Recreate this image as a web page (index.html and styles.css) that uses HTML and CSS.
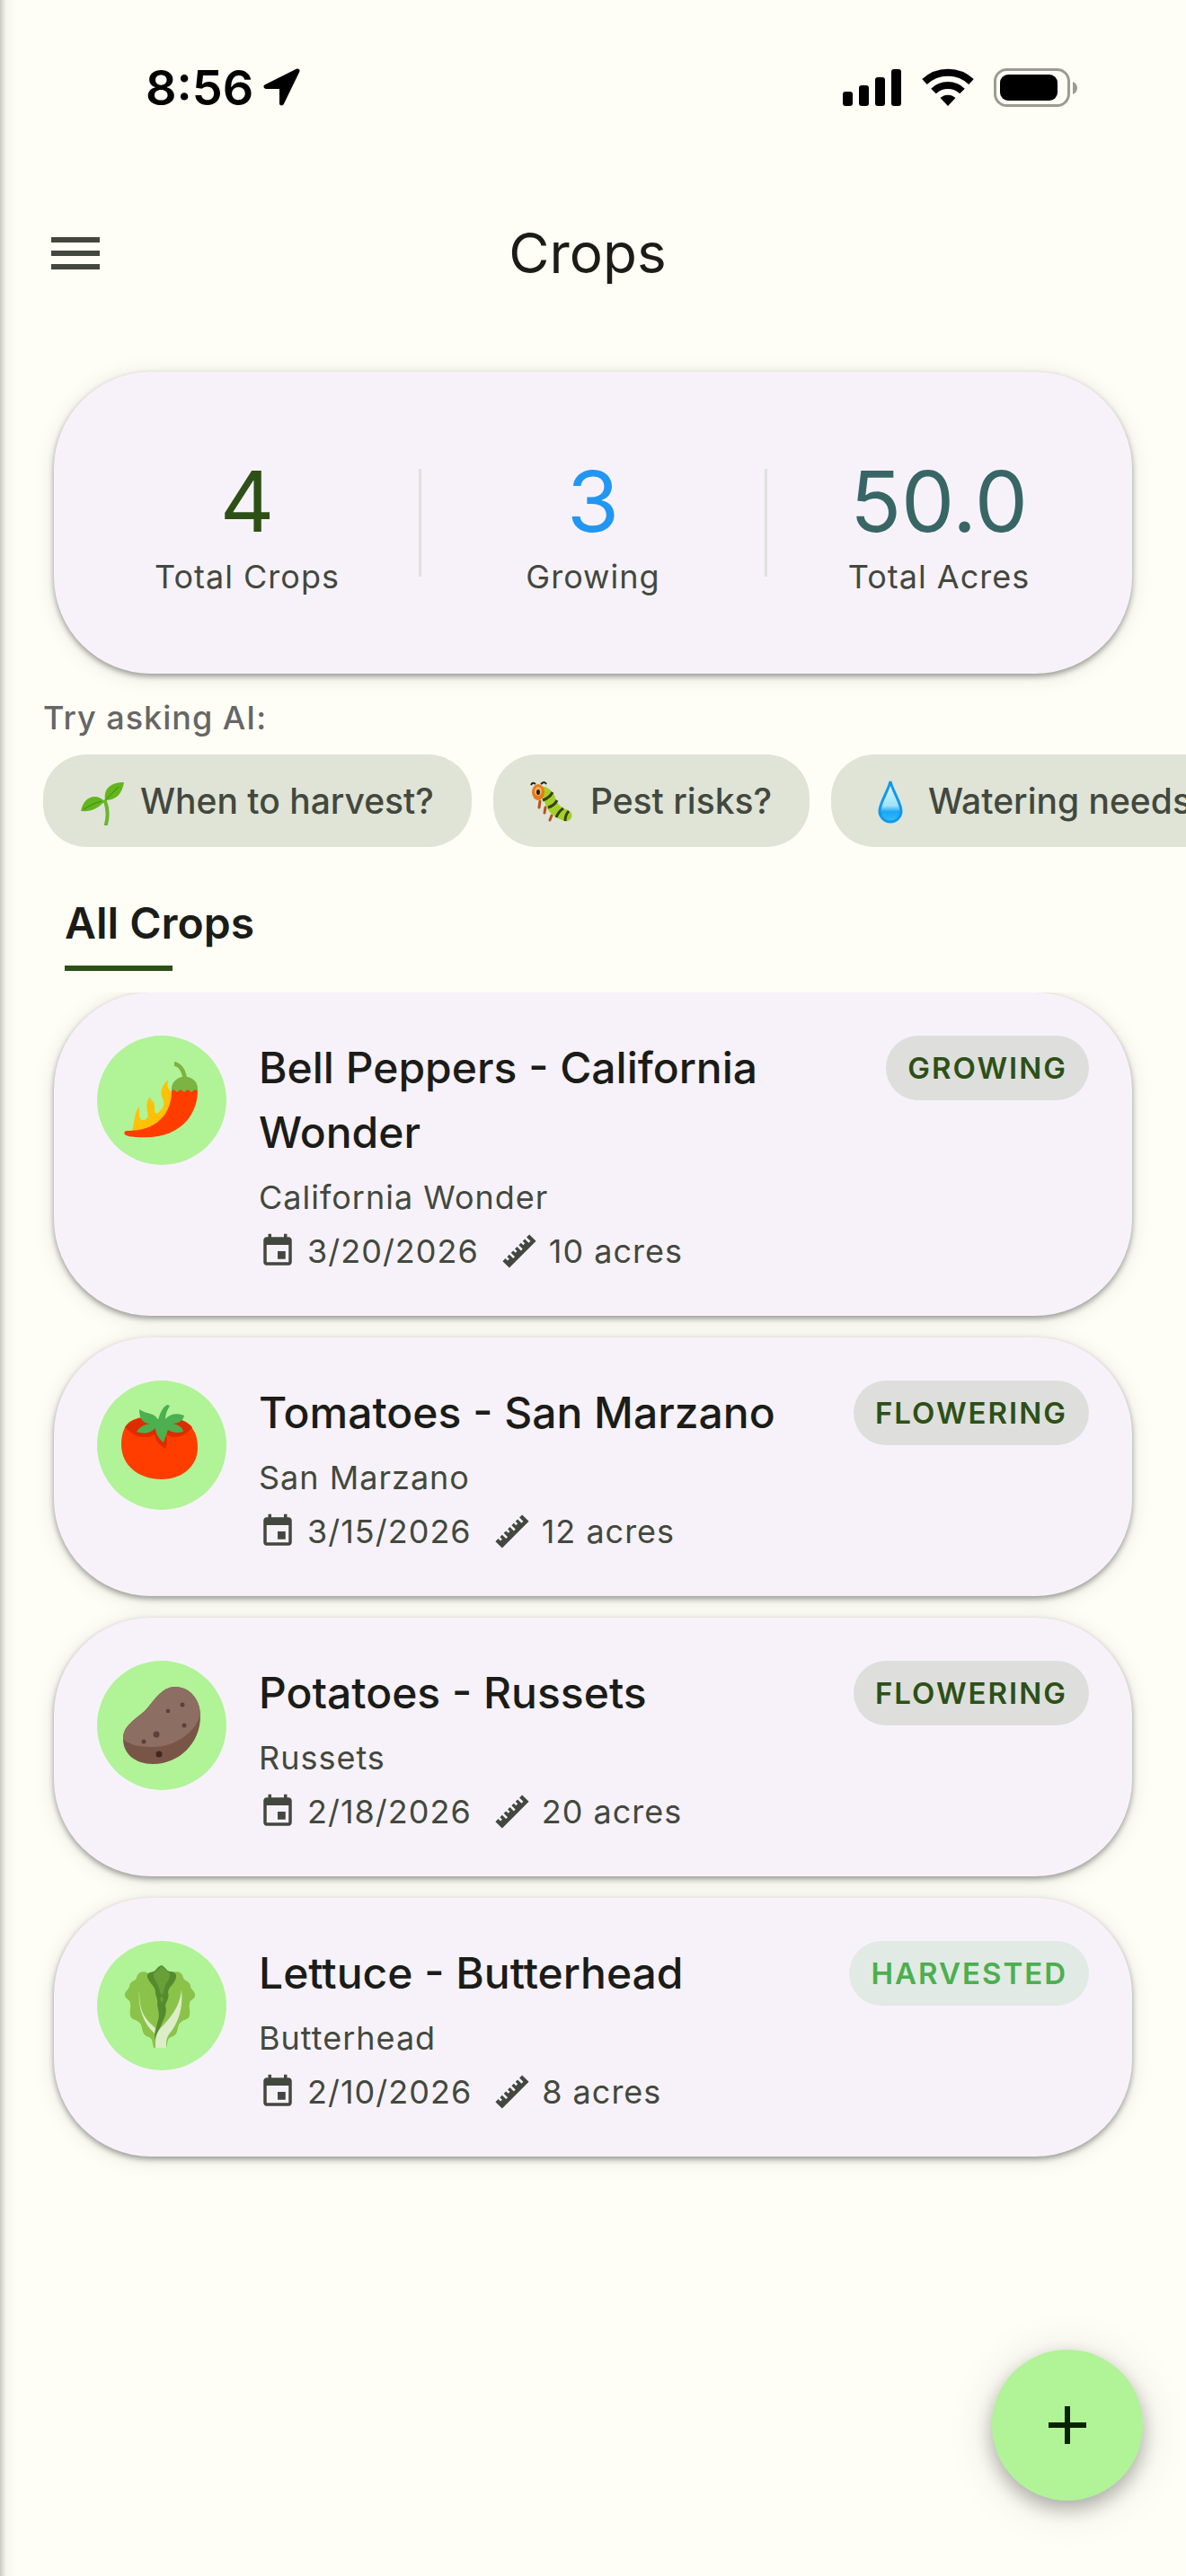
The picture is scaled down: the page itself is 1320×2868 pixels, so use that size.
FILE: index.html
```html
<!DOCTYPE html>
<html lang="en">

<head>
    <meta charset="UTF-8">
    <meta name="viewport" content="width=device-width, initial-scale=1.0">
    <title>Crops</title>
    <link rel="stylesheet" href="styles.css">
</head>

<body>
    <!-- shared icons -->
    <svg class="defs" aria-hidden="true">
        <symbol id="event" viewBox="0 0 24 24">
            <path d="M17 12h-5v5h5v-5zM16 1v2H8V1H6v2H5c-1.11 0-1.99.9-1.99 2L3 19c0 1.1.89 2 2 2h14c1.1 0 2-.9 2-2V5c0-1.1-.9-2-2-2h-1V1h-2zm3 18H5V8h14v11z" />
        </symbol>
        <symbol id="ruler" viewBox="0 0 24 24">
            <path d="M1.39 18.36L3.16 16.6 4.58 18l1.06-1.05-1.42-1.41 1.42-1.42 2.47 2.48 1.06-1.06-2.47-2.48 1.41-1.41 1.42 1.41L10.59 12 9.17 10.59l1.42-1.42 2.47 2.48 1.06-1.06-2.47-2.48 1.41-1.41 1.41 1.41 1.07-1.06-1.42-1.41 1.42-1.42L18 6.7l1.07-1.06-2.47-2.48 1.76-1.77 4.25 4.25L5.64 22.61z" />
        </symbol>
    </svg>

    <div class="status-bar">
        <div class="status-left">
            <span class="time">8:56</span>
            <svg width="44" height="44" viewBox="0 0 44 44">
                <path d="M39 3L4 20.5 21.5 20.5 21.5 39z" stroke="#000" stroke-width="5" stroke-linejoin="round" />
            </svg>
        </div>
        <div class="status-right">
            <svg width="66" height="44" viewBox="0 0 66 44">
                <rect x="0" y="26" width="11" height="16" rx="3" />
                <rect x="18" y="19" width="11" height="23" rx="3" />
                <rect x="36" y="10" width="11" height="32" rx="3" />
                <rect x="54" y="1" width="11" height="41" rx="3" />
            </svg>
            <svg width="58" height="44" viewBox="0 0 58 44">
                <path d="M29 42L20.5 33a12.5 12.5 0 0 1 17 0z" />
                <path d="M13 25.5a23 23 0 0 1 32 0" fill="none" stroke="#000" stroke-width="8" />
                <path d="M3 15a38 38 0 0 1 52 0" fill="none" stroke="#000" stroke-width="8" />
            </svg>
            <svg width="94" height="44" viewBox="0 0 94 44">
                <rect x="1.5" y="1.5" width="82" height="40" rx="13" fill="none" stroke="#9b9b95" stroke-width="3" />
                <rect x="7" y="7" width="64" height="29" rx="9" />
                <path d="M88 15q5 2 5 7t-5 7z" fill="#9b9b95" />
            </svg>
        </div>
    </div>

    <header class="app-bar">
        <button class="menu-btn" aria-label="Open menu">
            <svg viewBox="0 0 24 24"><path d="M3 18h18v-2H3v2zm0-5h18v-2H3v2zm0-7v2h18V6H3z" /></svg>
        </button>
        <h1>Crops</h1>
    </header>

    <section class="card summary">
        <div class="stat">
            <span class="stat-value total">4</span>
            <span class="stat-label">Total Crops</span>
        </div>
        <div class="divider"></div>
        <div class="stat">
            <span class="stat-value growing">3</span>
            <span class="stat-label">Growing</span>
        </div>
        <div class="divider"></div>
        <div class="stat">
            <span class="stat-value acres">50.0</span>
            <span class="stat-label">Total Acres</span>
        </div>
    </section>

    <section class="ask">
        <p>Try asking AI:</p>
        <div class="chips">
            <button class="chip">
                <svg viewBox="0 0 54 54">
                    <path d="M33 27c3 8 4 15 1 26" fill="none" stroke="#6cb52d" stroke-width="4" stroke-linecap="round" />
                    <path d="M33 27c-8 1-13 5-16 8" fill="none" stroke="#6cb52d" stroke-width="3" />
                    <path d="M33 26C31 13 39 6 54 6c-2 13-9 20-21 20z" fill="#63b51e" />
                    <path d="M32 27C24 18 9 21 6 38c11 1 20-3 26-11z" fill="#63b51e" />
                    <path d="M34 25l14-14M9 36c7-4 12-7 20-9" fill="none" stroke="#398b0b" stroke-width="1" />
                </svg>
                When to harvest?
            </button>
            <button class="chip">
                <svg viewBox="0 0 54 54">
                    <path d="M16 27l-1 7M22 34l-1 6M29 43l-2 5" stroke="#b9531a" stroke-width="3" stroke-linecap="round" />
                    <path d="M18 17Q25 18 28 28T45 43" fill="none" stroke="#a6cf26" stroke-width="13" stroke-linecap="round" />
                    <path d="M30 17q-3 6-11 9M35 26q-3 6-10 8M42 35q-5 3-8 10M48 38q-4 4-4 11" fill="none" stroke="#33401b" stroke-width="3" />
                    <ellipse cx="14" cy="17" rx="7" ry="9" fill="#e8791c" />
                    <ellipse cx="14" cy="16" rx="4" ry="5" fill="#f5b35a" />
                    <ellipse cx="14" cy="17" rx="2" ry="3" fill="#222" />
                    <path d="M11 8Q8 5 6 9M17 8q4-4 6 0" fill="none" stroke="#222" stroke-width="2" />
                </svg>
                Pest risks?
            </button>
            <button class="chip">
                <svg viewBox="0 0 54 54">
                    <defs>
                        <linearGradient id="drop" x1="0" y1="0" x2="0" y2="1">
                            <stop offset="0" stop-color="#e2f8fe" />
                            <stop offset="0.6" stop-color="#9fe3fc" />
                            <stop offset="0.75" stop-color="#1ba5f5" />
                            <stop offset="1" stop-color="#35c0fa" />
                        </linearGradient>
                    </defs>
                    <path d="M30 5C27 17 18 29 18 38a12 12 0 0 0 24 0C42 29 33 17 30 5z" fill="url(#drop)" stroke="#1298ea" stroke-width="3" />
                </svg>
                Watering needs?
            </button>
        </div>
    </section>

    <h2>All Crops</h2>

    <main class="crop-list">
        <article class="card crop">
            <div class="avatar">
                <svg viewBox="0 0 144 144">
                    <path d="M38 109C43 97 40 87 47 79c0 7-1 13 3 15 5 1 8-3 6-10-1-7-1-11 3-16 1 6 5 4 5 11 0 5 0 9 4 7 6-5 8-10 5-16-4-9 1-16 6-21-1 7-1 11 4 13v27L58 111z" fill="#ffc107" />
                    <path d="M83 59h29c1 27-18 58-67 54-11 0-18-3-13-7 31 1 52-16 51-47z" fill="#ff3d00" />
                    <path d="M86 29c7 1 12 7 14 17 8 1 13 7 12 16l-3-2-4 3-4-3-4 3-4-3-4 3-4-3-2 2c-1-9 5-15 12-16-1-7-5-12-9-12z" fill="#7cb342" />
                </svg>
            </div>
            <div class="info">
                <h3>Bell Peppers - California Wonder</h3>
                <p>California Wonder</p>
                <div class="meta">
                    <svg><use href="#event" /></svg>
                    <span class="date">3/20/2026</span>
                    <svg><use href="#ruler" /></svg>
                    <span>10 acres</span>
                </div>
            </div>
            <span class="badge">GROWING</span>
        </article>

        <article class="card crop">
            <div class="avatar">
                <svg viewBox="0 0 144 144">
                    <path d="M72 45C84 40 97 43 104 51c6 6 8 14 8 24 0 20-17 35-40 35-25 0-45-15-45-39 0-12 4-22 11-26 9-5 22-6 34 0z" fill="#ff3d00" />
                    <path d="M31 52c8-11 24-12 40-7 15-5 27-2 35 7-7 10-20 14-29 8 1 7 2 11-1 16-8-5-11-10-12-16-11 6-22 4-33-8z" fill="#dd2c00" />
                    <path d="M68 44C70 36 73 30 78 27l3 1c-3 5-5 10-5 15 5-6 13-7 21-4-1 6-7 9-13 9 7 1 12 5 12 9-6 2-12 1-17-2l-5 14c-5-4-9-10-9-16-6 6-13 7-21 4 3-5 8-8 15-9-7 0-12-4-12-16 8 6 17 3 21 12z" fill="#4caf50" />
                </svg>
            </div>
            <div class="info">
                <h3>Tomatoes - San Marzano</h3>
                <p>San Marzano</p>
                <div class="meta">
                    <svg><use href="#event" /></svg>
                    <span class="date">3/15/2026</span>
                    <svg><use href="#ruler" /></svg>
                    <span>12 acres</span>
                </div>
            </div>
            <span class="badge">FLOWERING</span>
        </article>

        <article class="card crop">
            <div class="avatar">
                <svg viewBox="0 0 144 144">
                    <path d="M87 29c16 0 28 14 28 33 0 29-23 53-53 53-19 0-33-11-33-28 0-14 11-20 24-31 10-10 18-27 34-27z" fill="#795548" />
                    <path d="M87 29c16 0 28 14 28 31-5 19-28 36-52 36-15 0-27-2-34-9 0-14 11-20 24-31 10-10 18-27 34-27z" fill="#8d6e63" />
                    <g fill="#5d4037">
                        <circle cx="95" cy="49" r="2.5" />
                        <circle cx="79" cy="56" r="2.3" />
                        <circle cx="97" cy="72" r="2.5" />
                        <circle cx="66" cy="82" r="3.5" />
                        <circle cx="52" cy="90" r="2.5" />
                    </g>
                    <circle cx="69" cy="104" r="3.5" fill="#3e2723" />
                </svg>
            </div>
            <div class="info">
                <h3>Potatoes - Russets</h3>
                <p>Russets</p>
                <div class="meta">
                    <svg><use href="#event" /></svg>
                    <span class="date">2/18/2026</span>
                    <svg><use href="#ruler" /></svg>
                    <span>20 acres</span>
                </div>
            </div>
            <span class="badge">FLOWERING</span>
        </article>

        <article class="card crop">
            <div class="avatar">
                <svg viewBox="0 0 144 144">
                    <path d="M57 36c-6-4-12-1-13 5-1 4-7 3-8 9 0 4-6 6-5 11 1 4 6 4 6 9 1 4-1 7 0 13 1 5 6 4 9 7 5 3 3 8 6 13 2 4 7 3 9 7l2 9h14l2-9c2-4 7-3 9-7 3-5 1-10 6-13 3-3 8-2 9-7 1-6-1-9 0-13 0-5 6-5 6-9 1-5-5-7-5-11-1-6-7-5-8-9-1-6-7-9-13-5z" fill="#8bc34a" />
                    <path d="M72 27c5 3 5 6 9 7 4 0 7 1 7 5 0 8-8 11-9 18 2 6-2 10-3 15 2 6 0 12-3 18l-9 20c0-8 2-15 4-22 2-6 0-11-1-17 1-5-1-8-2-13 1-8-9-12-9-19 0-4 3-4 7-5 4-2 3-5 9-7z" fill="#558b2f" />
                    <path d="M72 28c4 3 5 6 9 8 1 7-5 10-6 17-1 4-1 5-3 7-2-2-2-4-3-7-1-7-7-10-6-17 4-2 5-5 9-8zM72 61l2 4-2 4-2-4z" fill="#689f38" />
                    <path d="M47 54c0 21 3 30 18 43l-1 6C52 92 45 75 47 54zM94 54c2 20-3 37-14 50-3 4-3 9-3 15H65c0-9 0-14 4-20 12-13 23-24 25-45z" fill="#dcedc8" />
                </svg>
            </div>
            <div class="info">
                <h3>Lettuce - Butterhead</h3>
                <p>Butterhead</p>
                <div class="meta">
                    <svg><use href="#event" /></svg>
                    <span class="date">2/10/2026</span>
                    <svg><use href="#ruler" /></svg>
                    <span>8 acres</span>
                </div>
            </div>
            <span class="badge harvested">HARVESTED</span>
        </article>
    </main>

    <button class="fab" aria-label="Add crop">
        <svg viewBox="0 0 24 24"><path d="M19 13h-6v6h-2v-6H5v-2h6V5h2v6h6v2z" /></svg>
    </button>
</body>

</html>
```
FILE: styles.css
```css
* {
    box-sizing: border-box;
    margin: 0;
    padding: 0;
}

body {
    display: flex;
    flex-direction: column;
    min-height: 100vh;
    background-color: #fefef6;
    color: #1b1c18;
    font-family: Inter, "Liberation Sans", sans-serif;
    font-size: 36px;
    line-height: 48px;
}

/* shadow of the closed drawer along the left edge */
body::before {
    content: "";
    position: fixed;
    top: 0;
    bottom: 0;
    left: 0;
    width: 16px;
    background: linear-gradient(to right, rgba(0, 0, 0, 0.2), rgba(0, 0, 0, 0.04) 40%, transparent);
}

button {
    border: none;
    font-family: inherit;
    cursor: pointer;
}

svg {
    display: block;
    flex-shrink: 0;
}

.defs {
    position: absolute;
    width: 0;
    height: 0;
}

.status-bar {
    display: flex;
    justify-content: space-between;
    align-items: center;
    height: 198px;
    padding: 0 120px 2px 162px;
}

.status-left {
    display: flex;
    align-items: center;
    gap: 10px;
}

.time {
    font-size: 54px;
    font-weight: 600;
    color: #000;
}

.status-right {
    display: flex;
    gap: 22px;
}

.app-bar {
    display: grid;
    grid-template-columns: 72px 1fr 72px;
    align-items: center;
    height: 168px;
    padding: 0 60px 0 48px;
}

.menu-btn {
    background: none;
}

.menu-btn svg {
    width: 72px;
    fill: #43483e;
}

h1 {
    font-size: 62px;
    font-weight: 400;
    line-height: 84px;
    text-align: center;
}

.card {
    margin: 0 60px;
    border-radius: 108px;
    background-color: #f7f2fa;
    box-shadow: 0 3px 6px rgba(0, 0, 0, 0.36), 0 3px 24px rgba(0, 0, 0, 0.1);
}

.summary {
    display: flex;
    align-items: center;
    margin-top: 48px;
    padding: 84px 24px;
}

.stat {
    display: flex;
    flex: 1;
    flex-direction: column;
    align-items: center;
}

.stat-value {
    font-size: 94px;
    line-height: 120px;
}

.stat-label {
    color: #43483e;
    letter-spacing: 1px;
}

.total {
    color: #2d5016;
}

.growing {
    color: #2196f3;
}

.acres {
    color: #386666;
}

.divider {
    width: 3px;
    height: 120px;
    background-color: #e0e0e0;
}

.ask {
    padding: 25px 0 0 48px;
    overflow: hidden;
}

.ask p {
    color: #666;
    font-weight: 500;
    letter-spacing: 1px;
}

.chips {
    display: flex;
    gap: 24px;
    margin-top: 17px;
}

.chip {
    display: flex;
    flex-shrink: 0;
    align-items: center;
    gap: 18px;
    height: 103px;
    padding: 0 42px 0 36px;
    border-radius: 48px;
    background-color: #dfe4d7;
    color: #43483e;
    font-size: 39px;
    font-weight: 500;
}

.chip svg {
    width: 54px;
}

h2 {
    margin: 49px 72px 24px;
    font-size: 48px;
    font-weight: 600;
    line-height: 72px;
}

h2::after {
    content: "";
    display: block;
    width: 120px;
    height: 6px;
    margin-top: 11px;
    background-color: #2d5016;
}

.crop-list {
    display: flex;
    flex: 1;
    flex-direction: column;
    gap: 24px;
    padding-bottom: 108px;
    overflow: hidden;
}

.crop {
    display: flex;
    align-items: flex-start;
    padding: 48px;
}

.avatar {
    flex-shrink: 0;
    width: 144px;
    margin-right: 36px;
    border-radius: 50%;
    background-color: #b1f397;
}

.info {
    flex: 1;
    margin-right: 24px;
    color: #43483e;
    letter-spacing: 1px;
}

h3 {
    color: #1b1c18;
    font-size: 48px;
    font-weight: 500;
    line-height: 72px;
    letter-spacing: normal;
}

.info p {
    margin: 12px 0;
}

.meta {
    display: flex;
    align-items: center;
    gap: 12px;
}

.meta svg {
    width: 42px;
    height: 42px;
    fill: #43483e;
}

.date {
    margin-right: 12px;
}

.badge {
    padding: 0 24px;
    border-radius: 36px;
    background-color: #dedfdc;
    color: #2d5016;
    font-size: 33px;
    font-weight: 600;
    line-height: 72px;
    letter-spacing: 2px;
}

.harvested {
    background-color: #e1eae4;
    color: #4caf50;
}

.fab {
    position: fixed;
    right: 48px;
    bottom: 84px;
    display: flex;
    align-items: center;
    justify-content: center;
    width: 168px;
    height: 168px;
    border-radius: 50%;
    background-color: #b1f397;
    box-shadow: 0 9px 21px rgba(0, 0, 0, 0.28), 0 6px 54px rgba(0, 0, 0, 0.12);
}

.fab svg {
    width: 72px;
    fill: #0a2100;
}
```
